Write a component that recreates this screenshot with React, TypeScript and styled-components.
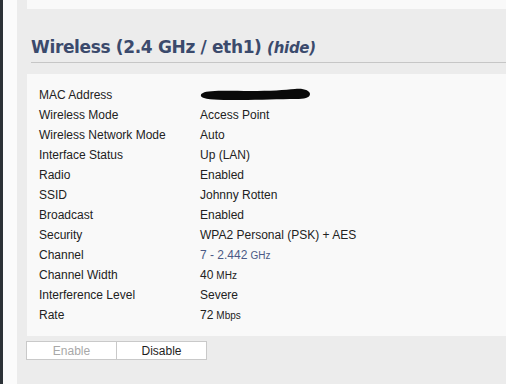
import { createGlobalStyle, styled } from "styled-components";

const Global = createGlobalStyle`
  html, body {
    margin: 0;
    padding: 0;
    background: #ececec;
    font-family: "Liberation Sans", Arial, sans-serif;
  }
`;

const Page = styled.div`
  display: flex;
  height: 384px;
  width: 506px;
  overflow: hidden;
`;

const DarkStrip = styled.div`
  width: 3px;
  background: #2c3237;
`;

const LightStrip = styled.div`
  width: 14px;
  background: #fbfbfb;
`;

const Main = styled.div`
  flex: 1;
  background: #ececec;
  padding-left: 10px;
  display: flex;
  flex-direction: column;
`;

const TopPanel = styled.div`
  height: 9px;
  background: #f9f9f9;
`;

const Heading = styled.h2`
  margin: 27px 0 0 4px;
  padding-bottom: 3px;
  border-bottom: 1px solid #c6c6c6;
  font-family: "DejaVu Sans", Verdana, sans-serif;
  font-size: 17px;
  line-height: 22px;
  font-weight: 700;
  color: #3b4a6c;
  letter-spacing: -0.35px;
  white-space: nowrap;
`;

const Hide = styled.span`
  font-size: 15px;
  font-style: italic;
  font-weight: 700;
  letter-spacing: -0.3px;
`;

const Panel = styled.div`
  margin-top: 11px;
  background: #f9f9f9;
  padding: 11px 0 11px 12px;
`;

const Row = styled.div`
  display: grid;
  grid-template-columns: 161px 1fr;
  height: 20px;
  align-items: center;
  font-size: 12px;
  color: #222;
`;

const Value = styled.span<{ $link?: boolean }>`
  color: ${(p) => (p.$link ? "#4b5a86" : "#222")};
  display: flex;
  align-items: center;
`;

const Unit = styled.span`
  font-size: 10px;
  margin-left: 3px;
`;

const Buttons = styled.div`
  display: flex;
  margin: 5px 0 0 -1px;
`;

const Button = styled.button<{ $disabled?: boolean }>`
  appearance: none;
  width: 91px;
  height: 19px;
  padding: 0;
  border: 1px solid #c9c9c9;
  background: #fff;
  font-family: "Liberation Sans", Arial, sans-serif;
  font-size: 12px;
  color: ${(p) => (p.$disabled ? "#a8a8a8" : "#1e1e1e")};
  & + & {
    margin-left: -1px;
  }
`;

function Redacted() {
  return (
    <svg width="112" height="14" viewBox="0 0 112 14">
      <path
        d="M3 5 C8 2 30 3 50 3 C70 3 85 2 95 1 C104 0 110 3 110 6 C110 10 104 11 96 11 C80 11 60 12 40 12 C25 12 10 12 4 10 C0 9 0 6 3 5 Z"
        fill="#0a0a0a"
      />
    </svg>
  );
}

const rows: { label: string; value: React.ReactNode; link?: boolean }[] = [
  { label: "MAC Address", value: <Redacted /> },
  { label: "Wireless Mode", value: "Access Point" },
  { label: "Wireless Network Mode", value: "Auto" },
  { label: "Interface Status", value: "Up (LAN)" },
  { label: "Radio", value: "Enabled" },
  { label: "SSID", value: "Johnny Rotten" },
  { label: "Broadcast", value: "Enabled" },
  { label: "Security", value: "WPA2 Personal (PSK) + AES" },
  { label: "Channel", value: <>7 - 2.442<Unit>GHz</Unit></>, link: true },
  { label: "Channel Width", value: <>40<Unit>MHz</Unit></> },
  { label: "Interference Level", value: "Severe" },
  { label: "Rate", value: <>72<Unit>Mbps</Unit></> },
];

export default function App() {
  return (
    <Page>
      <Global />
      <DarkStrip />
      <LightStrip />
      <Main>
        <TopPanel />
        <Heading>
          Wireless (2.4 GHz / eth1) <Hide>(hide)</Hide>
        </Heading>
        <Panel>
          {rows.map((r) => (
            <Row key={r.label}>
              <span>{r.label}</span>
              <Value $link={r.link}>{r.value}</Value>
            </Row>
          ))}
        </Panel>
        <Buttons>
          <Button $disabled>Enable</Button>
          <Button>Disable</Button>
        </Buttons>
      </Main>
    </Page>
  );
}
